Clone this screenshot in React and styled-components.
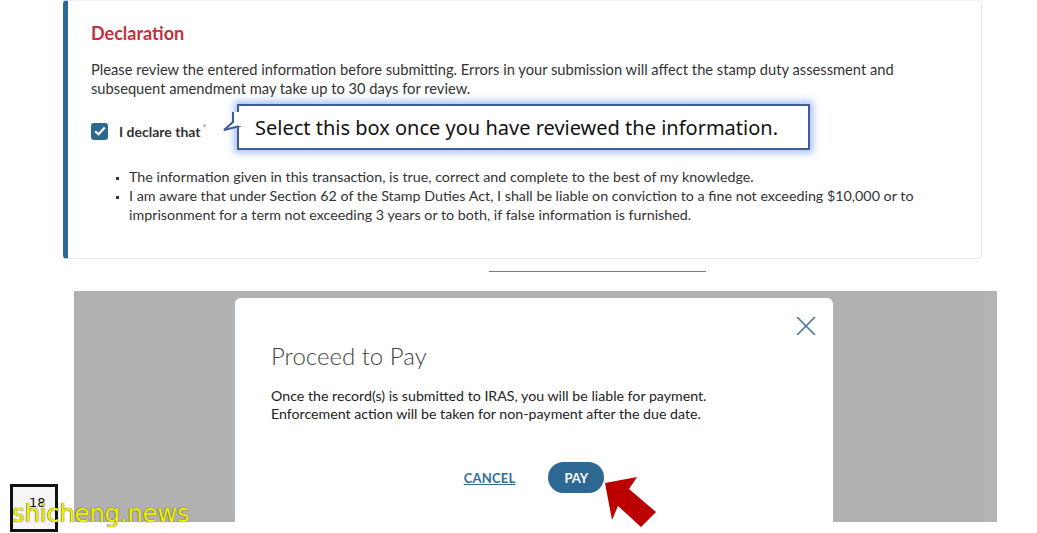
import React from "react";
import styled, { createGlobalStyle } from "styled-components";

const GlobalStyle = createGlobalStyle`
  html, body {
    margin: 0;
    padding: 0;
    background: #ffffff;
  }
  body {
    font-family: "Lato", "Noto Sans", sans-serif;
    color: #333;
  }
`;

const Page = styled.div`
  width: 1037px;
  height: 533px;
  position: relative;
  overflow: hidden;
  display: flex;
  flex-direction: column;
`;

const Card = styled.section`
  box-sizing: border-box;
  margin-left: 63px;
  width: 919px;
  height: 259px;
  border: 1px solid #e4e6e8;
  border-left: 5px solid #2b6a96;
  border-top-color: #f0f0f0;
  border-radius: 4px;
  padding: 21px 0 0 23px;
  display: flex;
  flex-direction: column;
`;

const Heading = styled.h2`
  margin: 0;
  font-size: 18px;
  line-height: 22px;
  font-weight: 700;
  color: #c0333e;
`;

const Lead = styled.p`
  margin: 16px 0 0;
  width: 830px;
  font-size: 14.7px;
  line-height: 19px;
  color: #333;
`;

const DeclareRow = styled.div`
  margin-top: 24px;
  display: flex;
  align-items: center;
  gap: 11px;
  position: relative;
  height: 18px;
`;

const Checkbox = styled.span`
  width: 17px;
  height: 17px;
  border-radius: 3px;
  background: #2c6892;
  display: flex;
  align-items: center;
  justify-content: center;
`;

const DeclareLabel = styled.span`
  font-size: 14px;
  font-weight: 700;
  color: #333;

  sup {
    font-size: 9px;
    color: #777;
    font-weight: 400;
    margin-left: 2px;
  }
`;

const Callout = styled.div`
  position: absolute;
  left: 146px;
  top: -18px;
  width: 573px;
  height: 46px;
  box-sizing: border-box;
  border: 2px solid #3c5c9d;
  background: #fff;
  box-shadow: 0 0 7px 3px rgba(110, 150, 235, 0.6);
  display: flex;
  align-items: center;
  padding-left: 16px;
  font-family: "Noto Sans", "DejaVu Sans", sans-serif;
  font-size: 20px;
  color: #111;
`;

const CalloutTail = styled.svg`
  position: absolute;
  left: -15px;
  top: 6px;
  overflow: visible;
`;

const Bullets = styled.ul`
  margin: 27px 0 0;
  padding-left: 38px;
  font-size: 14.3px;
  line-height: 19px;
  color: #333;
  width: 800px;
  list-style: square;

  li::marker {
    font-size: 9px;
  }
`;

const Divider = styled.hr`
  margin: 12px 0 0 489px;
  width: 217px;
  border: 0;
  border-top: 1px solid #7a7a7a;
  height: 0;
`;

const Overlay = styled.div`
  margin: 19px 0 0 74px;
  width: 923px;
  height: 231px;
  background: #b1b1b1;
  box-sizing: border-box;
  padding-top: 7px;
  border-right: 12px solid #b5b5b5;
  overflow: hidden;
  display: flex;
`;

const Modal = styled.div`
  margin-left: 160px;
  width: 599px;
  height: 240px;
  background: #fff;
  border-radius: 6px 6px 0 0;
  border-left: 1px solid #a9bdc8;
  box-sizing: border-box;
  padding: 0 0 0 36px;
  display: flex;
  flex-direction: column;
`;

const ModalTop = styled.div`
  display: flex;
  justify-content: flex-end;
  padding: 19px 17px 0 0;
  height: 18px;
`;

const ModalTitle = styled.h3`
  margin: 6px 0 0;
  font-size: 24px;
  line-height: 30px;
  font-weight: 300;
  color: #444;
`;

const ModalBody = styled.p`
  margin: 16px 0 0;
  font-size: 14.2px;
  line-height: 18px;
  color: #222;
`;

const Actions = styled.div`
  margin: 39px 0 0 -36px;
  display: flex;
  justify-content: center;
  align-items: center;
  gap: 33px;
`;

const TextButton = styled.span`
  font-size: 13px;
  font-weight: 700;
  color: #2e6f96;
  text-decoration: underline;
  letter-spacing: 0.2px;
`;

const PillButton = styled.span`
  width: 56px;
  height: 31px;
  border-radius: 16px;
  background: #2c6892;
  color: #fff;
  font-size: 13px;
  font-weight: 700;
  display: flex;
  align-items: center;
  justify-content: center;
`;

const Arrow = styled.svg`
  position: absolute;
  left: 601px;
  top: 473px;
`;

const Badge = styled.div`
  position: absolute;
  left: 10px;
  top: 484px;
  width: 48px;
  height: 48px;
  box-sizing: border-box;
  border: 3px solid #111;
  background: #f6f6f6;
  font-family: "DejaVu Sans", sans-serif;
  font-size: 13px;
  color: #111;
  padding: 8px 0 0 16px;
`;

const Watermark = styled.div`
  position: absolute;
  left: 12px;
  top: 499px;
  font-family: "DejaVu Sans", sans-serif;
  font-size: 24.5px;
  color: #f2f000;
  letter-spacing: -0.3px;
  text-shadow: 0 0 1px #555, 0 0 1px #555;
`;

const App = () => {
  return (
    <Page>
      <GlobalStyle />
      <Card>
        <Heading>Declaration</Heading>
        <Lead>
          Please review the entered information before submitting. Errors in your
          submission will affect the stamp duty assessment and subsequent amendment
          may take up to 30 days for review.
        </Lead>
        <DeclareRow>
          <Checkbox>
            <svg width="12" height="10" viewBox="0 0 12 10">
              <path d="M1.2 5.2 L4.5 8.2 L10.8 1.6" fill="none" stroke="#fff" strokeWidth="2.2" />
            </svg>
          </Checkbox>
          <DeclareLabel>
            I declare that<sup>*</sup>
          </DeclareLabel>
          <Callout>
            <CalloutTail width="16" height="20" viewBox="0 0 16 20">
              <path d="M16 0 L16 14 L0 18 L9 10 L9 0" fill="#fff" stroke="#3c5c9d" strokeWidth="2" />
              <rect x="14" y="0" width="4" height="14" fill="#fff" />
            </CalloutTail>
            Select this box once you have reviewed the information.
          </Callout>
        </DeclareRow>
        <Bullets>
          <li>The information given in this transaction, is true, correct and complete to the best of my knowledge.</li>
          <li>
            I am aware that under Section 62 of the Stamp Duties Act, I shall be liable on conviction to a fine not
            exceeding $10,000 or to imprisonment for a term not exceeding 3 years or to both, if false information is
            furnished.
          </li>
        </Bullets>
      </Card>
      <Divider />
      <Overlay>
        <Modal>
          <ModalTop>
            <svg width="20" height="18" viewBox="0 0 20 18">
              <path d="M1 0 L19 18 M19 0 L1 18" stroke="#4d7c98" strokeWidth="1.7" fill="none" />
            </svg>
          </ModalTop>
          <ModalTitle>Proceed to Pay</ModalTitle>
          <ModalBody>
            Once the record(s) is submitted to IRAS, you will be liable for payment.
            <br />
            Enforcement action will be taken for non-payment after the due date.
          </ModalBody>
          <Actions>
            <TextButton>CANCEL</TextButton>
            <PillButton>PAY</PillButton>
          </Actions>
        </Modal>
      </Overlay>
      <Arrow width="60" height="60" viewBox="0 0 60 60">
        <polygon points="4,10 36,4 28,16 55,39 40,54 17,33 11,47" fill="#bb0000" />
      </Arrow>
      <Badge>18</Badge>
      <Watermark>shicheng.news</Watermark>
    </Page>
  );
};

export default App;
